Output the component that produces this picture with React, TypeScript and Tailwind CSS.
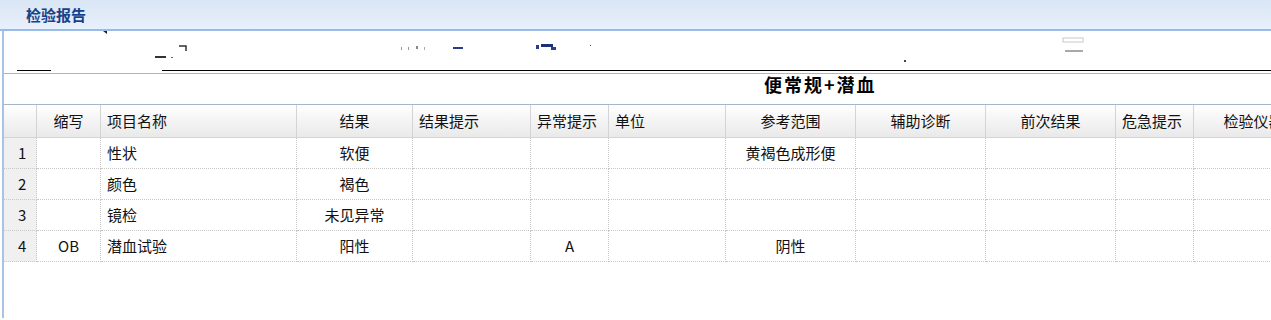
import React from 'react';

const font = { fontFamily: '"Noto Sans CJK SC", "Liberation Sans", sans-serif' };

type Col = { key: string; title: string; w: string; head: 'l' | 'c'; cell: 'l' | 'c' };

const cols: Col[] = [
  { key: 'abbr', title: '缩写', w: 'w-[64px]', head: 'c', cell: 'c' },
  { key: 'name', title: '项目名称', w: 'w-[196px]', head: 'l', cell: 'l' },
  { key: 'result', title: '结果', w: 'w-[116px]', head: 'c', cell: 'c' },
  { key: 'hint', title: '结果提示', w: 'w-[118px]', head: 'l', cell: 'l' },
  { key: 'abn', title: '异常提示', w: 'w-[78px]', head: 'l', cell: 'c' },
  { key: 'unit', title: '单位', w: 'w-[117px]', head: 'l', cell: 'l' },
  { key: 'range', title: '参考范围', w: 'w-[130px]', head: 'c', cell: 'c' },
  { key: 'diag', title: '辅助诊断', w: 'w-[130px]', head: 'c', cell: 'c' },
  { key: 'prev', title: '前次结果', w: 'w-[130px]', head: 'c', cell: 'c' },
  { key: 'crit', title: '危急提示', w: 'w-[78px]', head: 'l', cell: 'l' },
  { key: 'inst', title: '检验仪器', w: 'w-[120px]', head: 'c', cell: 'c' },
];

const rows: Record<string, string>[] = [
  { abbr: '', name: '性状', result: '软便', range: '黄褐色成形便' },
  { abbr: '', name: '颜色', result: '褐色' },
  { abbr: '', name: '镜检', result: '未见异常' },
  { abbr: 'OB', name: '潜血试验', result: '阳性', abn: 'A', range: '阴性' },
];

// leftover marks of the hidden patient info band
const Marks = () => (
  <svg width="1268" height="39" className="block shrink-0">
    <path d="M99 0 L103 0 L103 3 Z" fill="#222" />
    <rect x="151" y="25" width="11" height="2" fill="#333" />
    <rect x="167" y="26" width="2" height="1" fill="#666" />
    <path d="M175 15 H182 V20" stroke="#333" strokeWidth="1.5" fill="none" />
    <rect x="397" y="16" width="1" height="3" fill="#999" />
    <rect x="404" y="16" width="1" height="3" fill="#999" />
    <rect x="412" y="15" width="2" height="3" fill="#888" />
    <rect x="420" y="16" width="1" height="3" fill="#aaa" />
    <rect x="449" y="16" width="10" height="2" fill="#2a3c8c" />
    <rect x="532" y="14" width="3" height="4" fill="#2a3c8c" />
    <rect x="537" y="13" width="12" height="3" fill="#1e2f7a" />
    <rect x="547" y="16" width="5" height="3" fill="#2a3c8c" />
    <rect x="586" y="14" width="1" height="1" fill="#555" />
    <rect x="900" y="29" width="2" height="2" fill="#444" />
    <rect x="1059" y="7" width="20" height="4" fill="none" stroke="#c8c8c8" strokeWidth="1" />
    <rect x="1061" y="19" width="18" height="2" fill="#a8a8a8" />
  </svg>
);

export default function App() {
  return (
    <div className="w-[1271px] h-[320px] overflow-hidden bg-white" style={font}>
      <div className="h-[31px] border-b-2 border-[#99bbe8] bg-gradient-to-b from-[#dae6f5] to-[#e8f0fb] flex items-center pl-[26px]">
        <span className="text-[15px] font-bold text-[#15428b] leading-none">检验报告</span>
      </div>

      <div className="ml-[2px] border-l-2 border-[#a9c3e8] h-[287px] overflow-hidden">
        <Marks />
        <div className="flex h-px">
          <div className="ml-[13px] w-[34px] bg-black" />
          <div className="ml-[111px] flex-1 bg-black" />
        </div>
        <div className="h-[2px]" />
        <div className="border-t border-[#a4b6c9] h-[31px] flex items-start">
          <span className="ml-[760px] text-[18px] leading-[20px] font-bold tracking-[2px] text-black">便常规+潜血</span>
        </div>

        <div className="border-t border-[#a4b6c9] w-max text-[15px] text-[#111]">
          <div className="flex h-[33px]">
            <div className="w-[33px] shrink-0 border-r border-b border-[#d4d4d4] bg-gradient-to-b from-white to-[#e9e9e9]" />
            {cols.map(c => (
              <div
                key={c.key}
                className={`${c.w} shrink-0 flex items-center px-[6px] border-r border-b border-[#d4d4d4] bg-gradient-to-b from-white to-[#e9e9e9] ${c.head === 'c' ? 'justify-center' : 'justify-start'}`}
              >
                {c.title}
              </div>
            ))}
          </div>
          {rows.map((r, i) => (
            <div key={i} className="flex h-[31px]">
              <div className="w-[33px] shrink-0 flex items-center pl-[14px] bg-[#f0f0f0] border-r border-b border-dotted border-[#c8c8c8]">
                {i + 1}
              </div>
              {cols.map(c => (
                <div
                  key={c.key}
                  className={`${c.w} shrink-0 flex items-center px-[6px] border-r border-b border-dotted border-[#c8c8c8] ${c.cell === 'c' ? 'justify-center' : 'justify-start'}`}
                >
                  {r[c.key] || ''}
                </div>
              ))}
            </div>
          ))}
        </div>
      </div>
    </div>
  );
}
